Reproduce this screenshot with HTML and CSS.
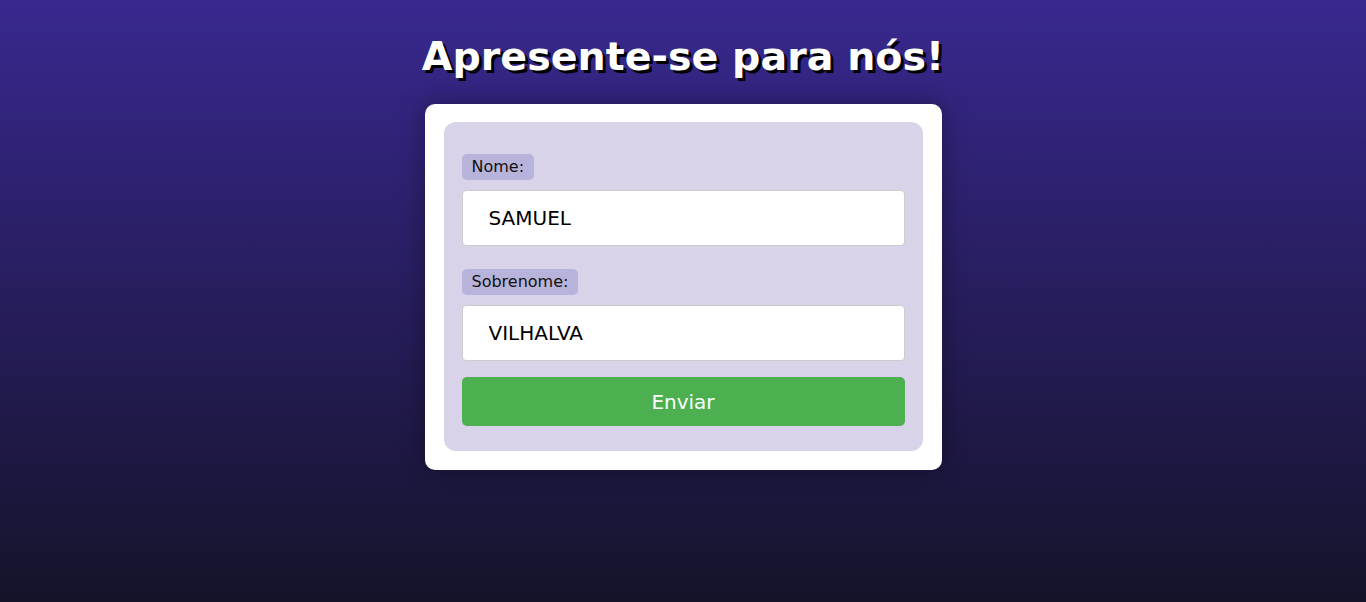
FILE: index.html
```html
<!DOCTYPE html>
<html lang="pt-BR">
<head>
<meta charset="utf-8">
<title>Apresente-se</title>
<link rel="stylesheet" href="styles.css">
</head>
<body>
<main class="page">
  <h1 class="title">Apresente-se para nós!</h1>
  <div class="card">
    <form class="form">
      <div class="field">
        <label class="label" for="nome">Nome:</label>
        <input class="input" id="nome" type="text" value="SAMUEL">
      </div>
      <div class="field">
        <label class="label" for="sobrenome">Sobrenome:</label>
        <input class="input" id="sobrenome" type="text" value="VILHALVA">
      </div>
      <button class="button" type="button">Enviar</button>
    </form>
  </div>
</main>
</body>
</html>
```

FILE: styles.css
```css
html, body {
  margin: 0;
  height: 100%;
}
body {
  background: linear-gradient(to bottom, #38288f 0%, #15132a 100%);
  font-family: "DejaVu Sans", Verdana, sans-serif;
  min-height: 602px;
}
.page {
  display: flex;
  flex-direction: column;
  align-items: center;
  padding-top: 30px;
}
.title {
  margin: 0 0 21px 0;
  color: #fff;
  font-size: 39.6px;
  font-weight: bold;
  line-height: 53px;
  text-shadow: 3px 3px 0 #000;
}
.card {
  width: 479px;
  padding: 18px 19px 19px 19px;
  background: #fff;
  border-radius: 10px;
  box-shadow: 0 0 24px rgba(0, 0, 0, 0.35);
}
.form {
  display: flex;
  flex-direction: column;
  background: #d8d3e8;
  border-radius: 12px;
  padding: 32px 18px 25px 18px;
}
.field {
  display: flex;
  flex-direction: column;
  align-items: flex-start;
  margin-bottom: 23px;
}
.field + .field {
  margin-bottom: 16px;
}
.label {
  background: #b8b3da;
  border-radius: 5px;
  padding: 0 10px 0 10px;
  height: 26px;
  line-height: 26px;
  font-size: 16px;
  color: #111;
  margin-bottom: 10px;
}
.input {
  box-sizing: border-box;
  width: 100%;
  height: 56px;
  border: 1px solid #ccc;
  border-radius: 4px;
  background: #fff;
  padding: 0 26px;
  font-family: "DejaVu Sans", Verdana, sans-serif;
  font-size: 20px;
  color: #000;
  outline: none;
}
.button {
  height: 49px;
  border: none;
  border-radius: 5px;
  background: #4caf50;
  color: #fff;
  font-family: "DejaVu Sans", Verdana, sans-serif;
  font-size: 20px;
  cursor: pointer;
}
```
